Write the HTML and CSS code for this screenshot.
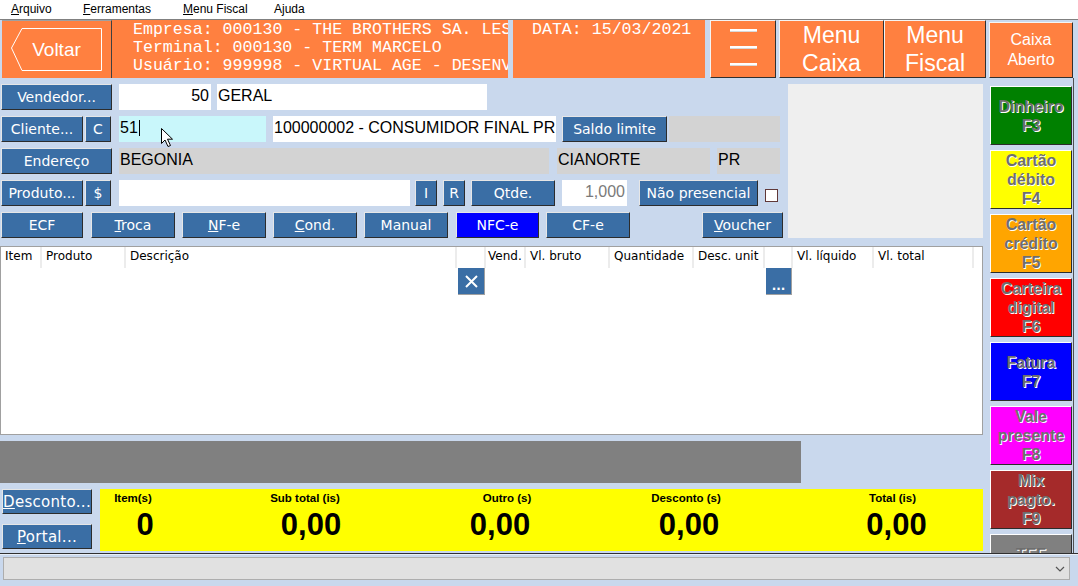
FILE: index.html
```html
<!DOCTYPE html>
<html lang="pt-BR">
<head>
    <meta charset="UTF-8">
    <title>PDV - Frente de Caixa</title>
    <link rel="stylesheet" href="styles.css">
</head>
<body>
<div class="app">
    <div class="menubar">
        <span class="menu-item m1"><u>A</u>rquivo</span>
        <span class="menu-item m2"><u>F</u>erramentas</span>
        <span class="menu-item m3"><u>M</u>enu Fiscal</span>
        <span class="menu-item">Ajuda</span>
    </div>

    <div class="top">
        <button class="voltar">
            <svg class="voltar-shape" width="110" height="58" viewBox="0 0 110 58">
                <polygon points="9.5,28 20,8.5 99.5,8.5 99.5,50.5 20,50.5" fill="none" stroke="#fff" stroke-width="1"/>
            </svg>
            <span class="voltar-text">Voltar</span>
        </button>
        <div class="info">
            <div>Empresa: 000130 - THE BROTHERS SA. LESTE</div>
            <div>Terminal: 000130 - TERM MARCELO</div>
            <div>Usuário: 999998 - VIRTUAL AGE - DESENVOLVIMENTO</div>
        </div>
        <div class="data">DATA: 15/03/2021</div>
        <button class="hbtn hamb"><span></span><span></span><span></span></button>
        <button class="hbtn big caixa-menu">Menu<br>Caixa</button>
        <button class="hbtn big fiscal-menu">Menu<br>Fiscal</button>
        <button class="hbtn caixa-aberto">Caixa<br>Aberto</button>
    </div>

    <div class="body">
        <div class="main">
            <div class="form-area">
                <div class="form">
                    <div class="row">
                        <button class="btn w111">Vendedor...</button>
                        <div class="field num ml7 w92">50</div>
                        <div class="field ml6 w270">GERAL</div>
                    </div>
                    <div class="row">
                        <button class="btn w82">Cliente...</button>
                        <button class="btn ml2 w26">C</button>
                        <div class="field cyan ml8 w147">51<span class="caret"></span>
                            <svg class="pointer" width="13" height="20" viewBox="0 0 13 20">
                                <path d="M0.5 0.5 L0.5 15.5 L4 12 L7 18.5 L9.5 17.5 L6.5 11.2 L11.5 11.2 Z" fill="#fff" stroke="#000" stroke-width="1"/>
                            </svg>
                        </div>
                        <div class="field ml7 w283">100000002 - CONSUMIDOR FINAL PR</div>
                        <button class="btn ml6 w105">Saldo limite</button>
                        <div class="field gray ml2 w111"></div>
                    </div>
                    <div class="row">
                        <button class="btn w111">Endereço</button>
                        <div class="field gray ml7 w430">BEGONIA</div>
                        <div class="field gray ml8 w153">CIANORTE</div>
                        <div class="field gray ml7 w63">PR</div>
                    </div>
                    <div class="row">
                        <button class="btn w82">Produto...</button>
                        <button class="btn ml2 w26">$</button>
                        <div class="field ml8 w291"></div>
                        <button class="btn ml5 w22">I</button>
                        <button class="btn ml6 w22">R</button>
                        <button class="btn ml6 w84">Qtde.</button>
                        <div class="field num dim ml7 w65">1,000</div>
                        <button class="btn ml12 w119">Não presencial</button>
                        <span class="check ml7"></span>
                    </div>
                    <div class="row">
                        <button class="btn w82">ECF</button>
                        <button class="btn ml8 w84"><u>T</u>roca</button>
                        <button class="btn ml7 w84"><u>N</u>F-e</button>
                        <button class="btn ml7 w84"><u>C</u>ond.</button>
                        <button class="btn ml7 w84">Manual</button>
                        <button class="btn active ml8 w83">NFC-e</button>
                        <button class="btn ml7 w84">CF-e</button>
                        <button class="btn ml72 w81"><u>V</u>oucher</button>
                    </div>
                </div>
                <div class="panel"></div>
            </div>

            <div class="grid">
                <div class="grid-head">
                    <span class="c-item">Item</span>
                    <span class="c-prod">Produto</span>
                    <span class="c-desc">Descrição</span>
                    <span class="c-x"></span>
                    <span class="c-vend">Vend.</span>
                    <span class="c-bruto">Vl. bruto</span>
                    <span class="c-qtd">Quantidade</span>
                    <span class="c-dunit">Desc. unit</span>
                    <span class="c-more"></span>
                    <span class="c-liq">Vl. líquido</span>
                    <span class="c-total">Vl. total</span>
                </div>
                <div class="grid-tools">
                    <button class="tool del">
                        <svg width="13" height="13" viewBox="0 0 13 13"><path d="M1 1 L12 12 M12 1 L1 12" stroke="#fff" stroke-width="2"/></svg>
                    </button>
                    <button class="tool more">...</button>
                </div>
            </div>

            <div class="gray-bar"></div>

            <div class="bottom">
                <div class="bottom-btns">
                    <button class="btn btn-lg"><u>D</u>esconto...</button>
                    <button class="btn btn-lg"><u>P</u>ortal...</button>
                </div>
                <div class="totals">
                    <div class="tot-labels">
                        <span>Item(s)</span>
                        <span>Sub total (is)</span>
                        <span>Outro (s)</span>
                        <span>Desconto (s)</span>
                        <span>Total (is)</span>
                    </div>
                    <div class="tot-values">
                        <span>0</span>
                        <span>0,00</span>
                        <span>0,00</span>
                        <span>0,00</span>
                        <span>0,00</span>
                    </div>
                </div>
            </div>
        </div>

        <div class="side">
            <button class="pay dinheiro">Dinheiro<br>F3</button>
            <button class="pay debito">Cartão<br>débito<br>F4</button>
            <button class="pay credito">Cartão<br>crédito<br>F5</button>
            <button class="pay carteira">Carteira<br>digital<br>F6</button>
            <button class="pay fatura">Fatura<br>F7</button>
            <button class="pay vale">Vale<br>presente<br>F8</button>
            <button class="pay mix">Mix<br>pagto.<br>F9</button>
            <button class="pay tef">TEF<br>F10</button>
        </div>
    </div>

    <div class="statusbar">
        <div class="combo">
            <svg width="10" height="6" viewBox="0 0 10 6"><polyline points="1,1 5,5 9,1" fill="none" stroke="#555" stroke-width="1.2"/></svg>
        </div>
    </div>
</div>
</body>
</html>
```

FILE: styles.css
```css
* {
    box-sizing: border-box;
}
body {
    margin: 0;
    background: #c9d8ed;
    font-family: "DejaVu Sans", sans-serif;
    overflow: hidden;
}
button {
    margin: 0;
    padding: 0;
    cursor: pointer;
}
.app {
    width: 1078px;
    height: 586px;
    overflow: hidden;
}

/* menu bar */
.menubar {
    height: 20px;
    background: #fff;
    border-bottom: 1px solid #808080;
    padding: 0 0 2px 11px;
    display: flex;
    align-items: center;
    font: 12px "Liberation Sans", Arial, sans-serif;
    color: #000;
}
.m1 { width: 72px; }
.m2 { width: 100px; }
.m3 { width: 91px; }

/* top header */
.top {
    display: flex;
    height: 58px;
}
.voltar {
    position: relative;
    width: 110px;
    margin-left: 2px;
    background: #ff8040;
    border: none;
    border-top: 1px solid #a0a0a0;
    border-right: 1px solid #404040;
    color: #fff;
    font: 19px "Liberation Sans", Arial, sans-serif;
}
.voltar-shape {
    position: absolute;
    left: 0;
    top: -1px;
}
.voltar-text {
    position: relative;
}
.info, .data {
    background: #ff8040;
    color: #fff;
    font: 16.6px/18px "Liberation Mono", monospace;
    white-space: nowrap;
    overflow: hidden;
    padding-top: 1px;
}
.info {
    width: 396px;
    padding-left: 21px;
}
.data {
    width: 192px;
    margin-left: 5px;
    padding-left: 19px;
}
.hbtn {
    background: #ff8040;
    color: #fff;
    border: 1px solid;
    border-color: #f4f4f4 #303030 #303030 #f4f4f4;
    font-family: "Liberation Sans", Arial, sans-serif;
}
.hamb {
    width: 66px;
    margin-left: 5px;
    display: flex;
    flex-direction: column;
    align-items: center;
    justify-content: center;
    gap: 14px;
    padding-bottom: 4px;
}
.hamb span {
    display: block;
    width: 27px;
    height: 3px;
    background: #fff;
    border-bottom: 1px solid #d8d8d8;
}
.big {
    font-size: 23px;
    line-height: 28px;
}
.caixa-menu {
    width: 105px;
    margin-left: 3px;
}
.fiscal-menu {
    width: 102px;
}
.caixa-aberto {
    width: 84px;
    height: 56px;
    margin: 2px 0 0 3px;
    font-size: 16px;
    line-height: 20px;
}

/* body */
.body {
    display: flex;
    height: 475px;
    width: 1074px;
    overflow: hidden;
    border-right: 1px solid #505050;
}
.main {
    width: 983px;
}
.form-area {
    display: flex;
    margin-top: 6px;
    height: 154px;
}
.form {
    width: 788px;
    display: flex;
    flex-direction: column;
    gap: 6px;
}
.row {
    display: flex;
    height: 26px;
}
.panel {
    width: 195px;
    background: #efefef;
}

.btn {
    background: #3a6ea5;
    color: #fff;
    border: 1px solid;
    border-color: #e6e6e6 #2c2c2c #2c2c2c #e6e6e6;
    font: 14px "DejaVu Sans", sans-serif;
    white-space: nowrap;
    overflow: hidden;
}
.row .btn:first-child {
    margin-left: 1px;
}
.btn.active {
    background: #0000ff;
}
.field {
    position: relative;
    background: #fff;
    font: 16px "Liberation Sans", Arial, sans-serif;
    color: #000;
    padding: 0 2px 2px 1px;
    display: flex;
    align-items: center;
    white-space: nowrap;
    overflow: visible;
}
.field.num {
    justify-content: flex-end;
}
.field.dim {
    color: #7a7a7a;
}
.field.gray {
    background: #d3d3d3;
}
.field.cyan {
    background: #c9f7fb;
}
.caret {
    display: inline-block;
    width: 1px;
    height: 16px;
    background: #000;
    margin-left: 1px;
}
.pointer {
    position: absolute;
    left: 42px;
    top: 12px;
}
.check {
    width: 13px;
    height: 13px;
    margin-top: 9px;
    background: #fff;
    border: 1px solid #603838;
}

.ml2 { margin-left: 2px; }
.ml5 { margin-left: 5px; }
.ml6 { margin-left: 6px; }
.ml7 { margin-left: 7px; }
.ml8 { margin-left: 8px; }
.ml12 { margin-left: 12px; }
.ml72 { margin-left: 72px; }
.w22 { width: 22px; }
.w26 { width: 26px; }
.w63 { width: 63px; }
.w65 { width: 65px; }
.w81 { width: 81px; }
.w82 { width: 82px; }
.w83 { width: 83px; }
.w84 { width: 84px; }
.w92 { width: 92px; }
.w105 { width: 105px; }
.w111 { width: 111px; }
.w119 { width: 119px; }
.w147 { width: 147px; }
.w153 { width: 153px; }
.w270 { width: 270px; }
.w283 { width: 283px; }
.w291 { width: 291px; }
.w430 { width: 430px; }

/* items grid */
.grid {
    margin-top: 8px;
    height: 189px;
    background: #fff;
    border: 1px solid #a0a0a0;
}
.grid-head {
    display: flex;
    height: 21px;
    font: 12px/18px "DejaVu Sans", sans-serif;
    color: #000;
}
.grid-head span {
    border-right: 2px solid #ececec;
    padding-left: 4px;
    white-space: nowrap;
    overflow: hidden;
}
.c-item { width: 41px; }
.c-prod { width: 84px; }
.c-desc { width: 331px; }
.c-x { width: 29px; }
.c-vend { width: 40px; padding-left: 2px !important; }
.c-bruto { width: 84px; }
.c-qtd { width: 84px; }
.c-dunit { width: 71px; }
.c-more { width: 28px; }
.c-liq { width: 81px; }
.c-total { width: 100px; }
.grid-tools {
    display: flex;
    padding-left: 457px;
}
.tool {
    width: 27px;
    height: 27px;
    background: #3a6ea5;
    border: none;
    border-right: 1px solid #a0a0a0;
    border-bottom: 1px solid #a0a0a0;
    color: #fff;
}
.del {
    display: flex;
    align-items: center;
    justify-content: center;
}
.more {
    margin-left: 281px;
    width: 26px;
    font: bold 12px "DejaVu Sans", sans-serif;
    padding-top: 9px;
}

.gray-bar {
    margin-top: 6px;
    width: 801px;
    height: 42px;
    background: #808080;
}

/* bottom totals */
.bottom {
    display: flex;
    margin-top: 6px;
    height: 62px;
}
.bottom-btns {
    width: 100px;
    padding-left: 2px;
    display: flex;
    flex-direction: column;
    gap: 10px;
}
.btn-lg {
    width: 90px;
    height: 25px;
    font-size: 15px;
    letter-spacing: 0.3px;
}
.totals {
    width: 883px;
    background: #ffff00;
    padding-top: 2px;
    font-family: "Liberation Sans", Arial, sans-serif;
    font-weight: bold;
    color: #000;
}
.tot-labels {
    display: grid;
    grid-template-columns: 66px 278px 126px 232px 181px;
    font-size: 11.5px;
    line-height: 14px;
    text-align: center;
}
.tot-values {
    display: grid;
    grid-template-columns: 90px 242px 136px 242px 173px;
    margin-top: 2px;
    font-size: 31px;
    line-height: 36px;
    text-align: center;
}

/* payment buttons */
.side {
    margin-left: 7px;
    width: 82px;
    padding-top: 8px;
    display: flex;
    flex-direction: column;
    gap: 5px;
}
.pay {
    flex: none;
    height: 59px;
    border: 1px solid;
    border-color: #fff #2c2c2c #2c2c2c #fff;
    font: bold 16px/19px "Liberation Sans", Arial, sans-serif;
    color: #6e6e6e;
    text-shadow: 1px 1px 0 #fff;
    text-align: center;
}
.dinheiro { background: #008000; }
.debito { background: #ffff00; }
.credito { background: #ffa500; }
.carteira { background: #ff0000; }
.fatura { background: #0000ff; }
.vale { background: #ff00ff; }
.mix { background: #a52a2a; }
.tef { background: #808080; }

/* status bar */
.statusbar {
    height: 33px;
    border-top: 1px solid #303030;
    padding: 3px 8px 0 3px;
    box-shadow: inset 0 1px 0 #e8eef6;
}
.combo {
    height: 23px;
    background: #e1e1e1;
    border: 1px solid #adadad;
    display: flex;
    justify-content: flex-end;
    align-items: center;
    padding-right: 4px;
}
```
